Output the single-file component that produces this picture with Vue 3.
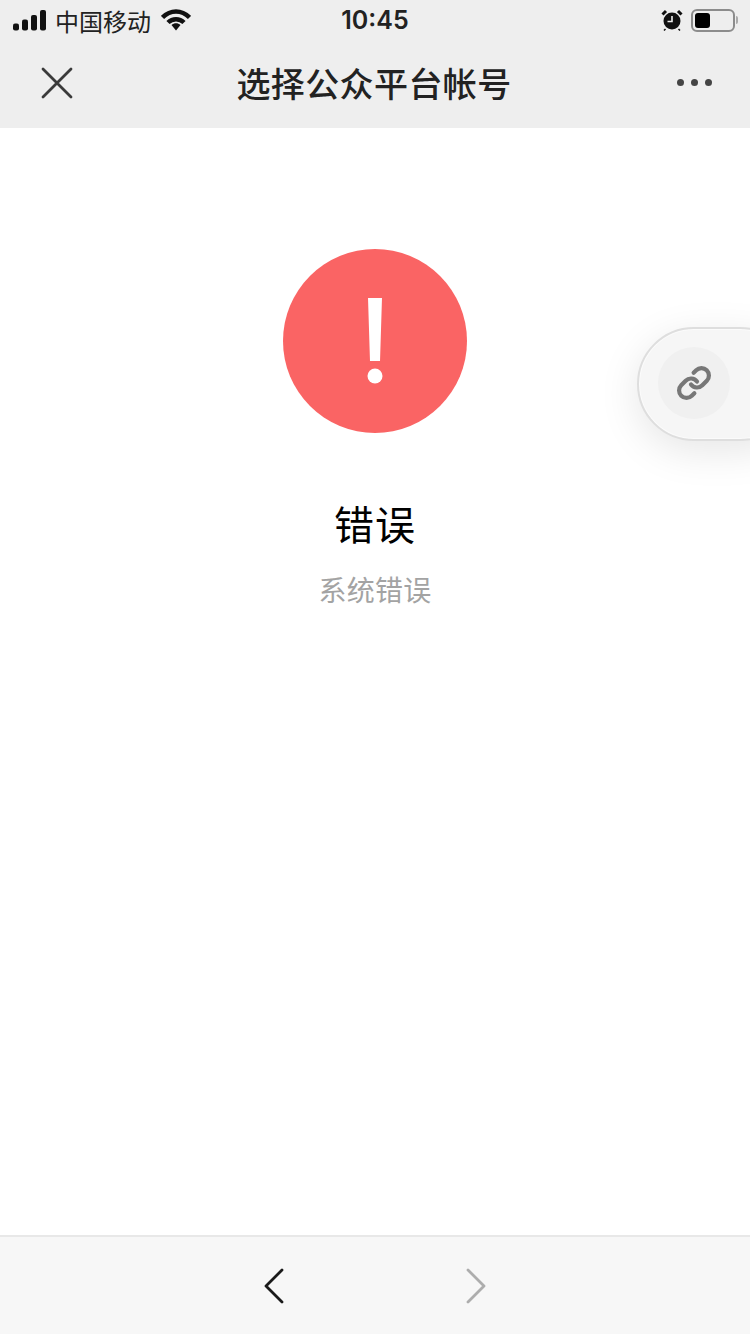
<template>
  <div class="page">
    <!-- 顶部状态栏 + 导航 -->
    <header class="top">
      <div class="status-bar">
        <div class="status-left">
          <svg class="signal" width="34" height="21" viewBox="0 0 34 21">
            <rect x="0" y="13.500" width="6" height="7" rx="2" />
            <rect x="9" y="9.500" width="6" height="11" rx="2" />
            <rect x="18" y="5" width="6" height="15.500" rx="2" />
            <rect x="27" y="0" width="6" height="20.500" rx="2" />
          </svg>
          <span class="carrier">中国移动</span>
          <svg class="wifi" width="30" height="22" viewBox="0 0 30 22">
            <path d="M1.500 8.500C9.500 0.500 20.500 0.500 28.500 8.500" />
            <path d="M7 13.500C11.500 9 18.500 9 23 13.500" />
            <path class="wifi-tip" d="M10.500 16C13 13.800 17 13.800 19.500 16L15 21.500Z" />
          </svg>
        </div>
        <div class="time">10:45</div>
        <div class="status-right">
          <svg width="22" height="22" viewBox="0 0 22 22">
            <circle cx="11" cy="12" r="8.500" fill="#111" />
            <path d="M11 7V12.500H6.500" fill="none" stroke="#eee" stroke-width="1.600" />
            <path d="M1.500 5.500 5 2M20.500 5.500 17 2" stroke="#111" stroke-width="3" />
            <path d="M4.500 20 3 21.500M17.500 20 19 21.500" stroke="#111" stroke-width="1.500" />
          </svg>
          <div class="battery"><div class="battery-level"></div></div>
          <div class="battery-cap"></div>
        </div>
      </div>
      <nav class="nav">
        <svg width="32" height="32" viewBox="0 0 32 32">
          <path d="M2 2 30 30M30 2 2 30" fill="none" stroke="#3a3a3a" stroke-width="2.800" stroke-linecap="round" />
        </svg>
        <div class="nav-title">选择公众平台帐号</div>
        <div class="more">
          <span class="dot"></span>
          <span class="dot"></span>
          <span class="dot"></span>
        </div>
      </nav>
    </header>

    <!-- 错误提示 -->
    <main class="content">
      <div class="warn-icon">
        <svg width="30" height="86" viewBox="0 0 30 86">
          <path d="M8 0H22L20 63H10Z" fill="#fff" />
          <circle cx="15" cy="78" r="7.500" fill="#fff" />
        </svg>
      </div>
      <h2 class="msg-title">错误</h2>
      <p class="msg-desc">系统错误</p>

      <!-- 右侧悬浮胶囊 -->
      <div class="float-pill">
        <div class="link-circle">
          <svg width="36" height="36" viewBox="0 0 24 24">
            <g fill="none" stroke="#777" stroke-width="2.800" stroke-linecap="round" stroke-linejoin="round">
              <path d="M10 13a5 5 0 0 0 7.540.540l3-3a5 5 0 0 0-7.070-7.070l-1.720 1.710" />
              <path d="M14 11a5 5 0 0 0-7.540-.540l-3 3a5 5 0 0 0 7.070 7.070l1.710-1.710" />
            </g>
          </svg>
        </div>
      </div>
    </main>

    <!-- 底部前进后退 -->
    <footer class="toolbar">
      <svg width="20" height="36" viewBox="0 0 20 36">
        <path d="M18 2 2 18 18 34" fill="none" stroke="#1a1a1a" stroke-width="2.800" stroke-linecap="round" stroke-linejoin="round" />
      </svg>
      <svg width="20" height="36" viewBox="0 0 20 36">
        <path d="M2 2 18 18 2 34" fill="none" stroke="#adadad" stroke-width="2.800" stroke-linecap="round" stroke-linejoin="round" />
      </svg>
    </footer>
  </div>
</template>

<script setup>
</script>

<style>
html, body {
  margin: 0;
  background: #fff;
}
</style>

<style scoped>
* {
  box-sizing: border-box;
}
.page {
  width: 750px;
  height: 1334px;
  display: flex;
  flex-direction: column;
  overflow: hidden;
  font-family: "Liberation Sans", "Noto Sans CJK SC", sans-serif;
}

/* 顶部 */
.top {
  height: 128px;
  background: #eeeeee;
}
.status-bar {
  height: 40px;
  position: relative;
  display: flex;
  align-items: center;
  justify-content: space-between;
  padding: 0 12px 0 13px;
}
.status-left {
  display: flex;
  align-items: center;
}
.signal rect {
  fill: #111;
}
.carrier {
  margin-left: 8px;
  font-size: 24px;
  color: #222;
}
.wifi {
  margin-left: 10px;
}
.wifi path {
  fill: none;
  stroke: #111;
  stroke-width: 4.500;
}
.wifi .wifi-tip {
  fill: #111;
  stroke: none;
}
.time {
  position: absolute;
  left: 0;
  right: 0;
  text-align: center;
  font-size: 25px;
  font-weight: 600;
  color: #222;
  font-family: "Inter", "Liberation Sans", sans-serif;
}
.status-right {
  display: flex;
  align-items: center;
}
.battery {
  width: 44px;
  height: 23px;
  margin-left: 8px;
  border: 2px solid #8c8c8c;
  border-radius: 6px;
  padding: 2px;
}
.battery-level {
  width: 15px;
  height: 15px;
  background: #000;
  border-radius: 3px;
}
.battery-cap {
  width: 2px;
  height: 8px;
  margin-left: 1px;
  background: #aaa;
  border-radius: 0 2px 2px 0;
}
.nav {
  height: 88px;
  display: flex;
  align-items: center;
  justify-content: space-between;
  padding: 0 38px 3px 41px;
}
.nav-title {
  margin-right: 2px;
  font-size: 34px;
  font-weight: 500;
  color: #222;
  letter-spacing: 0.400px;
}
.more {
  display: flex;
  gap: 7px;
}
.dot {
  width: 7px;
  height: 7px;
  border-radius: 50%;
  background: #444;
}

/* 内容 */
.content {
  flex: 1;
  position: relative;
  background: #fff;
  display: flex;
  flex-direction: column;
  align-items: center;
  padding-top: 121px;
}
.warn-icon {
  width: 184px;
  height: 184px;
  border-radius: 50%;
  background: #fa6464;
  display: flex;
  align-items: center;
  justify-content: center;
}
.msg-title {
  margin: 66px 0 0;
  font-size: 40px;
  line-height: 54px;
  font-weight: 400;
  color: #000;
  letter-spacing: 1px;
}
.msg-desc {
  margin: 19px 0 0;
  font-size: 28px;
  line-height: 40px;
  color: #a3a3a3;
  letter-spacing: 0.300px;
}
.float-pill {
  position: absolute;
  left: 637px;
  top: 199px;
  width: 160px;
  height: 114px;
  border: 2px solid #dedede;
  border-radius: 57px;
  background: #f6f6f6;
  box-shadow: 0 10px 40px rgba(0, 0, 0, 0.1), inset 0 0 0 1px #fbfbfb;
  padding: 18px 0 0 19px;
}
.link-circle {
  width: 72px;
  height: 72px;
  border-radius: 50%;
  background: #f0f0f0;
  display: flex;
  align-items: center;
  justify-content: center;
}

/* 底部 */
.toolbar {
  height: 99px;
  background: #f7f7f7;
  border-top: 2px solid #e8e8e8;
  display: flex;
  align-items: center;
  justify-content: center;
  gap: 182px;
}
</style>
